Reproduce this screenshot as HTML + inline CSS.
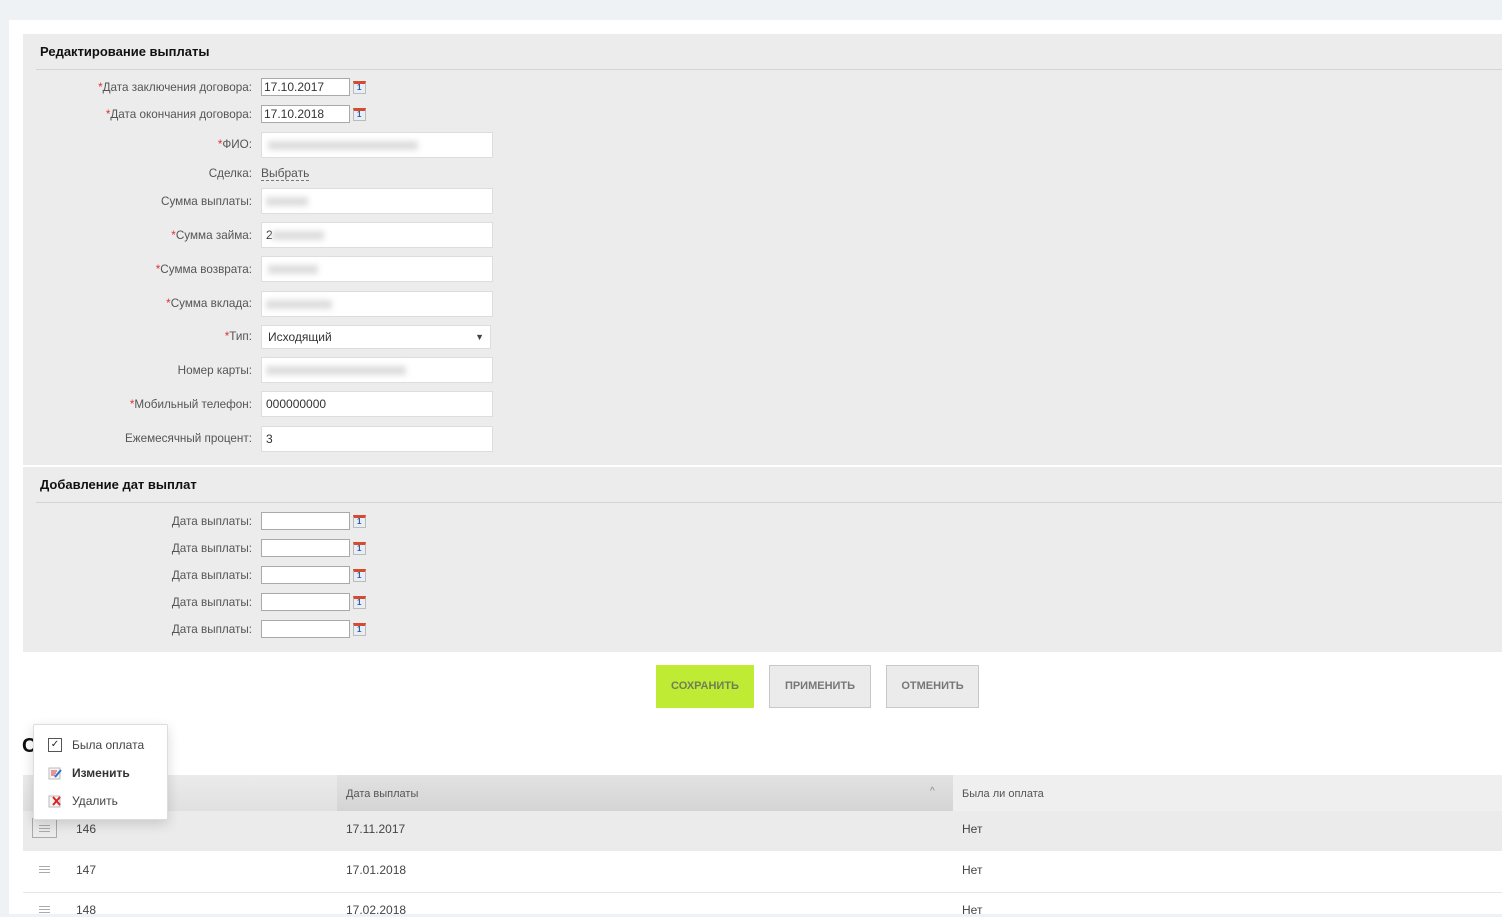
<!DOCTYPE html>
<html><head><meta charset="utf-8"><style>
*{box-sizing:border-box;margin:0;padding:0}
body{width:1502px;height:914px;overflow:hidden;background:#eef2f4;font-family:"Liberation Sans",Arial,sans-serif;position:relative;font-size:12px;color:#555}
.a{position:absolute}
.card{left:9px;top:20px;width:1493px;height:894px;background:#fff}
.panel{left:23px;background:#ececec;width:1479px}
.h{font-weight:bold;font-size:13px;color:#111;left:40px}
.hr{left:36px;width:1466px;height:1px;background:#d4d4d4}
.lbl{right:1250px;text-align:right;white-space:nowrap;font-size:11.7px;color:#555}
.lbl b{color:#d33;font-weight:normal}
.di{left:261px;width:89px;height:18px;background:#fff;border:1px solid #a9a9a9;font-size:12px;color:#333;padding-left:2px;line-height:16px}
.ti{left:261px;width:232px;height:26px;background:#fff;border:1px solid #ddd;font-size:12px;color:#333;padding-left:4px;line-height:24px}
.cal{left:353px;width:13px;height:13px;background:#e8eef4;border:1px solid #bbb;border-top:3px solid #d54b30}
.cal:after{content:"1";position:absolute;left:3px;top:-1px;font-size:8px;font-weight:bold;color:#2a5ca8}
.blur{position:absolute;top:8px;height:9px;background:#ddd;filter:blur(3px)}
.btn{top:665px;height:43px;border:1px solid #c8c8c8;background:#ebebeb;font-size:11px;font-weight:bold;color:#777;text-align:center;line-height:41px}
.cell{font-size:12px;color:#444}
.menu{left:48px;width:14px;height:14px}
.ham{position:absolute;left:39px;width:11px;height:7px;border-top:1px solid #aaa;border-bottom:1px solid #aaa}
.ham:after{content:"";position:absolute;left:0;right:0;top:2px;height:1px;background:#aaa}
</style></head><body>
<div class="a card"></div>
<div class="a panel" style="top:34px;height:431px"></div>
<div class="a panel" style="top:467px;height:185px"></div>
<div class="a h" style="top:44px">Редактирование выплаты</div>
<div class="a hr" style="top:69px"></div>

<div class="a lbl" style="top:81px"><b>*</b>Дата заключения договора:</div>
<div class="a di" style="top:78px">17.10.2017</div><div class="a cal" style="top:81px"></div>
<div class="a lbl" style="top:108px"><b>*</b>Дата окончания договора:</div>
<div class="a di" style="top:105px">17.10.2018</div><div class="a cal" style="top:108px"></div>
<div class="a lbl" style="top:138px"><b>*</b>ФИО:</div>
<div class="a ti" style="top:132px"><span class="blur" style="left:6px;width:150px"></span></div>
<div class="a lbl" style="top:167px">Сделка:</div>
<div class="a" style="left:261px;top:166px;font-size:12px;color:#555;border-bottom:1px dashed #777;line-height:14px">Выбрать</div>
<div class="a lbl" style="top:195px">Сумма выплаты:</div>
<div class="a ti" style="top:188px"><span class="blur" style="left:4px;width:42px"></span></div>
<div class="a lbl" style="top:229px"><b>*</b>Сумма займа:</div>
<div class="a ti" style="top:222px">2<span class="blur" style="left:10px;width:52px"></span></div>
<div class="a lbl" style="top:263px"><b>*</b>Сумма возврата:</div>
<div class="a ti" style="top:256px"><span class="blur" style="left:6px;width:50px"></span></div>
<div class="a lbl" style="top:297px"><b>*</b>Сумма вклада:</div>
<div class="a ti" style="top:291px"><span class="blur" style="left:4px;width:66px"></span></div>
<div class="a lbl" style="top:330px"><b>*</b>Тип:</div>
<div class="a ti" style="top:325px;width:230px;height:24px;line-height:22px;padding-left:6px">Исходящий<span style="position:absolute;right:6px;font-size:9px;color:#444">▼</span></div>
<div class="a lbl" style="top:364px">Номер карты:</div>
<div class="a ti" style="top:357px"><span class="blur" style="left:4px;width:140px"></span></div>
<div class="a lbl" style="top:398px"><b>*</b>Мобильный телефон:</div>
<div class="a ti" style="top:391px">000000000</div>
<div class="a lbl" style="top:432px">Ежемесячный процент:</div>
<div class="a ti" style="top:426px">3</div>

<div class="a h" style="top:477px">Добавление дат выплат</div>
<div class="a hr" style="top:502px"></div>
<div class="a lbl" style="top:515px">Дата выплаты:</div><div class="a di" style="top:512px"></div><div class="a cal" style="top:515px"></div>
<div class="a lbl" style="top:542px">Дата выплаты:</div><div class="a di" style="top:539px"></div><div class="a cal" style="top:542px"></div>
<div class="a lbl" style="top:569px">Дата выплаты:</div><div class="a di" style="top:566px"></div><div class="a cal" style="top:569px"></div>
<div class="a lbl" style="top:596px">Дата выплаты:</div><div class="a di" style="top:593px"></div><div class="a cal" style="top:596px"></div>
<div class="a lbl" style="top:623px">Дата выплаты:</div><div class="a di" style="top:620px"></div><div class="a cal" style="top:623px"></div>

<div class="a btn" style="left:656px;width:98px;background:#bfeb35;border-color:#bfeb35;color:#6f7f55">СОХРАНИТЬ</div>
<div class="a btn" style="left:769px;width:102px">ПРИМЕНИТЬ</div>
<div class="a btn" style="left:886px;width:93px">ОТМЕНИТЬ</div>

<div class="a" style="left:22px;top:735px;font-size:20px;font-weight:bold;color:#111">С</div>
<div class="a" style="left:23px;top:775px;width:314px;height:36px;background:linear-gradient(#ebebeb,#e0e0e0)"></div>
<div class="a" style="left:337px;top:775px;width:616px;height:36px;background:linear-gradient(#e2e2e2,#d4d4d4)"></div>
<div class="a" style="left:953px;top:775px;width:549px;height:36px;background:#efefef"></div>
<div class="a cell" style="left:346px;top:788px;font-size:11px;color:#555">Дата выплаты</div>
<div class="a cell" style="left:930px;top:786px;font-size:10px;color:#888">^</div>
<div class="a cell" style="left:962px;top:788px;font-size:11px;color:#555">Была ли оплата</div>
<div class="a" style="left:23px;top:811px;width:1479px;height:40px;background:#ebebeb"></div>
<div class="a" style="left:23px;top:892px;width:1479px;height:1px;background:#e6e6e6"></div>
<div class="a" style="left:32px;top:818px;width:25px;height:20px;border:1px solid #aaa"></div>
<div class="ham" style="top:825px"></div>
<div class="ham" style="top:866px"></div>
<div class="ham" style="top:906px"></div>
<div class="a cell" style="left:76px;top:822px">146</div><div class="a cell" style="left:346px;top:822px">17.11.2017</div><div class="a cell" style="left:962px;top:822px">Нет</div>
<div class="a cell" style="left:76px;top:863px">147</div><div class="a cell" style="left:346px;top:863px">17.01.2018</div><div class="a cell" style="left:962px;top:863px">Нет</div>
<div class="a cell" style="left:76px;top:903px">148</div><div class="a cell" style="left:346px;top:903px">17.02.2018</div><div class="a cell" style="left:962px;top:903px">Нет</div>

<div class="a" style="left:33px;top:724px;width:135px;height:96px;background:#fff;border:1px solid #ddd;border-radius:2px;box-shadow:0 4px 12px rgba(0,0,0,.15)"></div>
<div class="a" style="left:48px;top:738px;width:14px;height:14px;border:1px solid #555;font-size:10px;line-height:12px;text-align:center;color:#222">✓</div>
<div class="a cell" style="left:72px;top:738px">Была оплата</div>
<svg class="a menu" style="top:766px" viewBox="0 0 14 14"><rect x="1" y="2" width="11" height="11" fill="#f4f4f4" stroke="#bbb"/><path d="M3 5h6M3 7h5M3 9h4" stroke="#d33"/><path d="M7 11l6-7" stroke="#2b6dd1" stroke-width="2"/></svg>
<div class="a cell" style="left:72px;top:766px;font-weight:bold;color:#333">Изменить</div>
<svg class="a menu" style="top:794px" viewBox="0 0 14 14"><rect x="1" y="2" width="11" height="11" fill="#f4f4f4" stroke="#bbb"/><path d="M5 3l7 8M12 3l-7 8" stroke="#d22" stroke-width="2"/></svg>
<div class="a cell" style="left:72px;top:794px">Удалить</div>
</body></html>
